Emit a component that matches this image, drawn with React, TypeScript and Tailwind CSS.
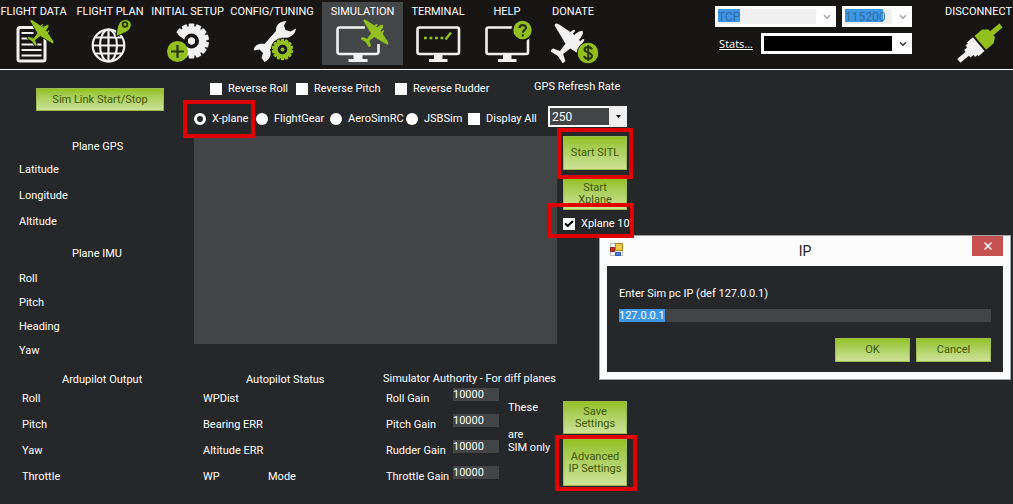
import React, { useState } from 'react';
import { Check, ChevronDown, X } from 'lucide-react';

const GREEN = '#93c01f';
const LIGHT = '#f1f1f1';

function Plane({ x, y, scale = 1, fill }: { x: number; y: number; scale?: number; fill: string }) {
  return (
    <path
      transform={`translate(${x} ${y}) rotate(45) scale(${scale})`}
      fill={fill}
      d="M0-15C1.8-14.5 2.9-11 3-7.5L4.6-7.5 4.7-10Q5.7-12 6.700-10L7.200-7 19-4.600Q23-3.200 20.500-1.200L8 2 3 3.200 1.900 11 7.500 13.800Q8.200 15.500 7.300 17L0 15.500-7.300 17Q-8.200 15.500-7.500 13.800L-1.900 11-3 3.200-8 2-20.500-1.200Q-23-3.200-19-4.600L-7.200-7-6.700-10Q-5.700-12-4.700-10L-4.600-7.500-3-7.500C-2.900-11-1.800-14.500 0-15Z"
    />
  );
}

function Gear({ x, y, r, teeth, fill, hole, hub }: { x: number; y: number; r: number; teeth: number; fill: string; hole: number; hub: number }) {
  return (
    <g fill={fill}>
      {Array.from({ length: teeth }, (_, i) => (
        <rect key={i} x={x - r * 0.16} y={y - r} width={r * 0.32} height={r * 0.5} rx="1" transform={`rotate(${(360 / teeth) * i} ${x} ${y})`} />
      ))}
      <circle cx={x} cy={y} r={r * 0.84} />
      <circle cx={x} cy={y} r={hole} fill="#181615" />
      <circle cx={x} cy={y} r={hub} />
    </g>
  );
}

function Icon({ children }: { children: React.ReactNode }) {
  return (
    <svg className="h-[45px] w-14 shrink-0" viewBox="0 1 56 45" fill="none" aria-hidden="true">
      {children}
    </svg>
  );
}

function Monitor() {
  return (
    <g>
      <rect x="7.500" y="9.500" width="41.500" height="26.500" rx="2" stroke={LIGHT} strokeWidth="2.600" />
      <path d="M24 36.500h8.500v4.500h5v3H19v-3h5z" fill={LIGHT} />
    </g>
  );
}

const dataIcon = (
  <Icon>
    <rect x="12" y="9.500" width="27" height="33.500" rx="2" stroke={LIGHT} strokeWidth="3" />
    <path d="M15.500 15h12M15.500 20.500h12M15.500 26.500h20M15.500 32h20M15.500 37.500h20" stroke={LIGHT} strokeWidth="2" />
    <g stroke="#181615" strokeWidth="1">
      <Plane x={34.500} y={15} scale={0.78} fill={GREEN} />
    </g>
  </Icon>
);

const planIcon = (
  <Icon>
    <g stroke={LIGHT} strokeWidth="2.200">
      <circle cx="26.500" cy="27.500" r="15.800" />
      <ellipse cx="26.500" cy="27.500" rx="8.500" ry="15.800" />
      <path d="M26.500 12v31.500M11 27.500h31M14 19.500h25M14 35.500h25" />
    </g>
    <path d="M34 18.500C35 14 34.500 9 37.500 4.500 41 .5 47 .8 48.800 4.500 50.500 8.500 47.500 12.500 43.500 14.500 40 16 37.500 17 34 18.500Z" fill={GREEN} stroke="#181615" />
    <circle cx="43" cy="6.500" r="3.200" fill="#26340a" />
    <circle cx="43" cy="6.500" r="1.400" fill={GREEN} />
  </Icon>
);

const setupIcon = (
  <Icon>
    <Gear x={31.500} y={23} r={17.500} teeth={14} fill={LIGHT} hole={7.500} hub={3.500} />
    <path d="M26 23L12 12-2 30 20 46 27 36Z" fill="#181615" />
    <circle cx="31.500" cy="23" r="3.500" fill={LIGHT} />
    <path d="M19.500 13L24 18 26.500 16 24 10Z" fill={LIGHT} />
    <circle cx="17.500" cy="33.500" r="10.500" fill={GREEN} />
    <path d="M17.500 27v13M11 33.500h13" stroke="#26340a" strokeWidth="2.200" />
  </Icon>
);

const configIcon = (
  <Icon>
    <path
      d="M42.500 3C36 3 31.500 7 32 13L20.500 26C14.500 24.500 9.500 28 10 32.500L15.500 31.500 19 35 17.500 40 20.500 44C25.500 42 28 37 26 31.500L38 19.500C45 21 51.500 17 52 10.500L46.500 13.500 41.500 12 40 7.500Z"
      fill={LIGHT}
    />
    <circle cx="38.500" cy="31.500" r="11.600" fill="#181615" />
    <Gear x={38.500} y={31.500} r={10.800} teeth={14} fill={GREEN} hole={4.800} hub={2} />
  </Icon>
);

const simIcon = (
  <Icon>
    <path d="M30 9.500H4.500Q2.500 9.500 2.500 12V33.500Q2.500 36 5 36H41Q43.500 36 43.500 33.500V26" stroke={LIGHT} strokeWidth="2.600" />
    <path d="M18.500 36.500h9v4.500h5v3h-19v-3h5z" fill={LIGHT} />
    <Plane x={39.500} y={15.500} scale={0.8} fill={GREEN} />
  </Icon>
);

const terminalIcon = (
  <Icon>
    <Monitor />
    <path d="M14 20h2.800M19.500 20h2.800M25 20h2.800M30.500 20h2.800" stroke={GREEN} strokeWidth="2.400" />
    <path d="M35.500 21.500l5.500-7" stroke={GREEN} strokeWidth="2.400" />
  </Icon>
);

const helpIcon = (
  <Icon>
    <Monitor />
    <circle cx="43.500" cy="12" r="11" fill="#181615" />
    <circle cx="43.500" cy="12" r="9.200" fill={GREEN} />
    <path d="M40.500 10C40.500 6.500 47 6 47 9.800 47 12 43.800 12.300 43.800 14.700M43.800 16.300v2.200" stroke="#26340a" strokeWidth="2.200" />
  </Icon>
);

const donateIcon = (
  <Icon>
    <Plane x={25.500} y={25.500} scale={1.15} fill={LIGHT} />
    <path d="M42 44L56 44 56 28 47 28Z" fill="#181615" />
    <circle cx="43" cy="35" r="10.800" fill={GREEN} stroke="#181615" strokeWidth="1" />
    <path d="M47 31.500C46 28 39.500 28 39.500 31.500 39.500 35 47 34 47 38 47 41.500 40 42 39 38M43.200 27v16" stroke="#26340a" strokeWidth="2" />
  </Icon>
);

const plugIcon = (
  <Icon>
    <g transform="translate(28.500 25.500) rotate(50)">
      <path d="M-9-1V-11L-5-16H-2.500V-28H2.500V-16H5L9-11V-1Z" fill={GREEN} />
      <path d="M-9 1V9H-7.500V12H-5V16H-2.500V27H2.500V16H5V12H7.500V9H9V1Z" fill={LIGHT} />
    </g>
  </Icon>
);

const tabs = [
  { label: 'FLIGHT DATA', icon: dataIcon, width: 'w-[67px]' },
  { label: 'FLIGHT PLAN', icon: planIcon, width: 'w-[86px]' },
  { label: 'INITIAL SETUP', icon: setupIcon, width: 'w-[69px]' },
  { label: 'CONFIG/TUNING', icon: configIcon, width: 'w-[100px]' },
  { label: 'SIMULATION', icon: simIcon, width: 'w-[81px]' },
  { label: 'TERMINAL', icon: terminalIcon, width: 'w-[70px]' },
  { label: 'HELP', icon: helpIcon, width: 'w-[68px]' },
  { label: 'DONATE', icon: donateIcon, width: 'w-16' },
];

function NavButton({ label, icon, width, active, onClick }: { label: string; icon: React.ReactNode; width: string; active?: boolean; onClick?: () => void }) {
  return (
    <button
      type="button"
      onClick={onClick}
      className={`mt-0.5 flex h-[63px] shrink-0 flex-col items-center whitespace-nowrap pt-[3px] ${width} ${active ? 'bg-[#454648]' : ''}`}
    >
      <span className="leading-[14px]">{label}</span>
      {icon}
    </button>
  );
}

function HeaderSelect({ label, value, className, muted }: { label: string; value: string; className: string; muted?: boolean }) {
  return (
    <div className="relative flex">
      <select
        aria-label={label}
        className={`h-[21px] appearance-none rounded-none border-[3px] border-white bg-white bg-no-repeat text-xs leading-[14px] ${muted ? 'text-[#346b9c]' : 'text-black'} ${className}`}
      >
        <option>{value}</option>
      </select>
      <ChevronDown className={`pointer-events-none absolute right-1 top-1.5 size-2.5 ${muted ? 'text-[#a5a5a5]' : 'text-[#404040]'}`} strokeWidth={4} />
    </div>
  );
}

function GreenButton({ children, className }: { children: React.ReactNode; className: string }) {
  return (
    <button type="button" className={`border border-[#9dbb4e] bg-linear-to-b from-[#94c11f] to-[#cde296] text-center leading-3 text-[#405704] ${className}`}>
      {children}
    </button>
  );
}

function Highlight({ className }: { className: string }) {
  return <span aria-hidden="true" className={`pointer-events-none absolute z-20 border-4 border-[#e00000] ${className}`} />;
}

function Tick({ label, checked }: { label: string; checked?: boolean }) {
  return (
    <label className="relative flex items-center gap-[6px] whitespace-nowrap">
      <input type="checkbox" defaultChecked={checked} className="peer size-3 shrink-0 appearance-none bg-white" />
      <Check className="pointer-events-none invisible absolute left-px size-2.5 text-black peer-checked:visible" strokeWidth={5} />
      {label}
    </label>
  );
}

function Choice({ label, checked }: { label: string; checked?: boolean }) {
  return (
    <label className="relative flex items-center gap-[6px] whitespace-nowrap">
      <input
        type="radio"
        name="simulator"
        defaultChecked={checked}
        className="size-3 shrink-0 appearance-none rounded-full bg-white checked:border-[3px] checked:border-white checked:bg-[#262729]"
      />
      {label}
      {checked && <Highlight className="-left-[11px] -top-3 h-[38px] w-[72px]" />}
    </label>
  );
}

function IpDialog({ onClose }: { onClose: () => void }) {
  return (
    <div role="dialog" aria-labelledby="ip-title" className="absolute left-[599px] top-[235px] z-10 w-[412px] border border-[#a5a5a5] bg-[#fcfcfc] px-[7px] pb-[7px]">
      <div className="relative flex h-[30px] items-center justify-center">
        <svg className="absolute left-0.5 top-1.5 size-[15px]" viewBox="0 0 15 15" aria-hidden="true">
          <path d="M1.500 1.500h12v12h-12z" fill="#fff" stroke="#bbb" />
          <path d="M6.500 1.500h7v7h-7z" fill="#f3c94c" stroke="#a9821b" />
          <path d="M1.500 5.500h4v4h-4z" fill="#c8302b" stroke="#8b1b17" />
          <path d="M6.500 10.500h5v3h-5z" fill="#4b7fe0" stroke="#2b55a8" />
        </svg>
        <h2 id="ip-title" className="text-sm text-[#222]">IP</h2>
        <button type="button" aria-label="Close" onClick={onClose} className="absolute right-0 top-0 flex h-5 w-[31px] items-center justify-center bg-[#c75050] text-white">
          <X className="size-3" strokeWidth={3} />
        </button>
      </div>
      <div className="flex flex-col bg-[#262729] px-3 pb-2.5 pt-[21px]">
        <label htmlFor="sim-ip" className="leading-[14px]">Enter Sim pc IP (def 127.0.0.1)</label>
        <input
          id="sim-ip"
          defaultValue="127.0.0.1"
          className="mt-2 h-[13px] w-full bg-[#434446] bg-[linear-gradient(#3c97e8,#3c97e8)] bg-[length:46px_100%] bg-no-repeat leading-[13px] text-white"
        />
        <div className="mt-4 flex justify-end gap-1.5">
          <GreenButton className="h-6 w-[75px]">OK</GreenButton>
          <GreenButton className="h-6 w-[75px]">Cancel</GreenButton>
        </div>
      </div>
    </div>
  );
}

function Rows({ items, className }: { items: string[]; className: string }) {
  return (
    <ul className={`flex flex-col ${className}`}>
      {items.map((item) => (
        <li key={item}>{item}</li>
      ))}
    </ul>
  );
}

const gains = ['Roll Gain', 'Pitch Gain', 'Rudder Gain', 'Throttle Gain'];

export default function App() {
  const [active, setActive] = useState('SIMULATION');
  const [dialogOpen, setDialogOpen] = useState(true);

  return (
    <div className="relative min-h-screen bg-[#262729] font-['Roboto','Liberation_Sans',sans-serif] text-[11px] leading-[14px] text-white">
      <header className="flex h-[70px] items-start border-b border-white bg-[#181615]">
        <nav className="flex">
          {tabs.map((tab) => (
            <NavButton key={tab.label} {...tab} active={active === tab.label} onClick={() => setActive(tab.label)} />
          ))}
        </nav>
        <div className="ml-auto flex flex-col items-end gap-1.5 pt-1.5">
          <div className="flex gap-1.5">
            <HeaderSelect label="Connection" value="TCP" muted className="w-[121px] bg-[linear-gradient(#3c97e8,#3c97e8),linear-gradient(#f0f0f0,#f0f0f0)] bg-[length:22px_13px,98px_100%]" />
            <HeaderSelect label="Baud rate" value="115200" muted className="w-[70px] bg-[linear-gradient(#3c97e8,#3c97e8),linear-gradient(#f0f0f0,#f0f0f0)] bg-[length:38px_13px,47px_100%]" />
          </div>
          <div className="flex items-center gap-2">
            <a href="#stats" className="font-['Open_Sans','Noto_Sans',sans-serif] text-[11px] underline">Stats...</a>
            <HeaderSelect label="Vehicle" value="" className="w-[151px] bg-[linear-gradient(#000,#000)] bg-[length:128px_100%]" />
          </div>
        </div>
        <div className="ml-8 flex">
          <NavButton label="DISCONNECT" icon={plugIcon} width="w-[69px]" />
        </div>
      </header>

      <main>
        <div className="flex">
          <section className="flex w-[194px] shrink-0 flex-col pt-[18px]">
            <GreenButton className="ml-9 h-[23px] w-32">Sim Link Start/Stop</GreenButton>
            <h3 className="ml-[72px] mt-[29px]">Plane GPS</h3>
            <Rows items={['Latitude', 'Longitude', 'Altitude']} className="ml-[19px] mt-[9px] gap-3" />
            <h3 className="ml-[72px] mt-[18px]">Plane IMU</h3>
            <Rows items={['Roll', 'Pitch', 'Heading', 'Yaw']} className="ml-[19px] mt-[11px] gap-2.5" />
          </section>

          <section className="flex flex-col">
            <div className="flex h-[66px]">
              <div className="w-[340px] pt-3">
                <div className="grid grid-cols-[86px_99px_auto] pl-4">
                  <Tick label="Reverse Roll" />
                  <Tick label="Reverse Pitch" />
                  <Tick label="Reverse Rudder" />
                </div>
                <div className="mt-4 grid w-[350px] grid-cols-[62px_74px_76px_62px_auto]">
                  <Choice label="X-plane" checked />
                  <Choice label="FlightGear" />
                  <Choice label="AeroSimRC" />
                  <Choice label="JSBSim" />
                  <Tick label="Display All" />
                </div>
              </div>
              <div className="flex flex-col pt-[10px]">
                <label htmlFor="gps-rate">GPS Refresh Rate</label>
                <div className="relative ml-3.5 mt-3 flex">
                  <select id="gps-rate" className="h-[21px] w-[79px] appearance-none rounded-none border-2 border-white bg-[#434446] pl-0.5 text-xs leading-4">
                    <option>250</option>
                  </select>
                  <span className="pointer-events-none absolute inset-y-0 right-0 flex w-[18px] items-center justify-center bg-[#f0f0f0]">
                    <svg className="h-[3px] w-[5px]" viewBox="0 0 5 3" aria-hidden="true">
                      <path d="M0 0h5L2.500 3z" fill="#000" />
                    </svg>
                  </span>
                </div>
              </div>
            </div>
            <div className="flex gap-1.5">
              <div className="h-52 w-[363px] bg-[#434446]" />
              <div className="flex w-16 flex-col">
                <div className="relative flex">
                  <GreenButton className="h-[34px] w-full">Start SITL</GreenButton>
                  <Highlight className="-left-1.5 -top-2 h-[51px] w-[76px]" />
                </div>
                <GreenButton className="mt-2 h-8 w-full">Start<br />Xplane</GreenButton>
                <div className="relative mt-[7px]">
                  <Tick label="Xplane 10" checked />
                  <Highlight className="-left-4 -top-[14px] h-[35px] w-[87px]" />
                </div>
              </div>
            </div>
          </section>
        </div>

        <div className="flex items-start pb-3 pt-[15px]">
          <section className="w-[203px] shrink-0">
            <h3 className="ml-[62px]">Ardupilot Output</h3>
            <Rows items={['Roll', 'Pitch', 'Yaw', 'Throttle']} className="ml-[22px] mt-[5px] gap-3" />
          </section>
          <section className="w-[180px] shrink-0">
            <h3 className="ml-[43px]">Autopilot Status</h3>
            <div className="mt-[5px] flex items-end">
              <Rows items={['WPDist', 'Bearing ERR', 'Altitude ERR', 'WP']} className="w-[65px] gap-3" />
              <span>Mode</span>
            </div>
          </section>
          <section className="w-[180px] shrink-0">
            <h3 className="-mt-px">Simulator Authority - For diff planes</h3>
            <div className="flex">
              <div className="mt-0.5 flex flex-col gap-3 pl-[3px]">
                {gains.map((gain) => (
                  <div key={gain} className="flex h-[14px] items-start">
                    <label htmlFor={gain} className="mt-1 w-[67px]">{gain}</label>
                    <input id={gain} defaultValue="10000" className="h-[13px] w-[46px] bg-[#434446] leading-[13px]" />
                  </div>
                ))}
              </div>
              <div className="ml-[9px] mt-[15px] flex flex-col">
                <p>These</p>
                <p className="mt-[13px] leading-[13px]">are<br />SIM only</p>
              </div>
            </div>
          </section>
          <section className="flex w-16 flex-col gap-[5px] pt-7">
            <GreenButton className="h-[33px] w-full">Save<br />Settings</GreenButton>
            <div className="relative flex">
              <GreenButton className="h-[47px] w-full">Advanced<br />IP Settings</GreenButton>
              <Highlight className="-left-2 -top-1 h-14 w-[82px]" />
            </div>
          </section>
        </div>
      </main>

      {dialogOpen && <IpDialog onClose={() => setDialogOpen(false)} />}
    </div>
  );
}
